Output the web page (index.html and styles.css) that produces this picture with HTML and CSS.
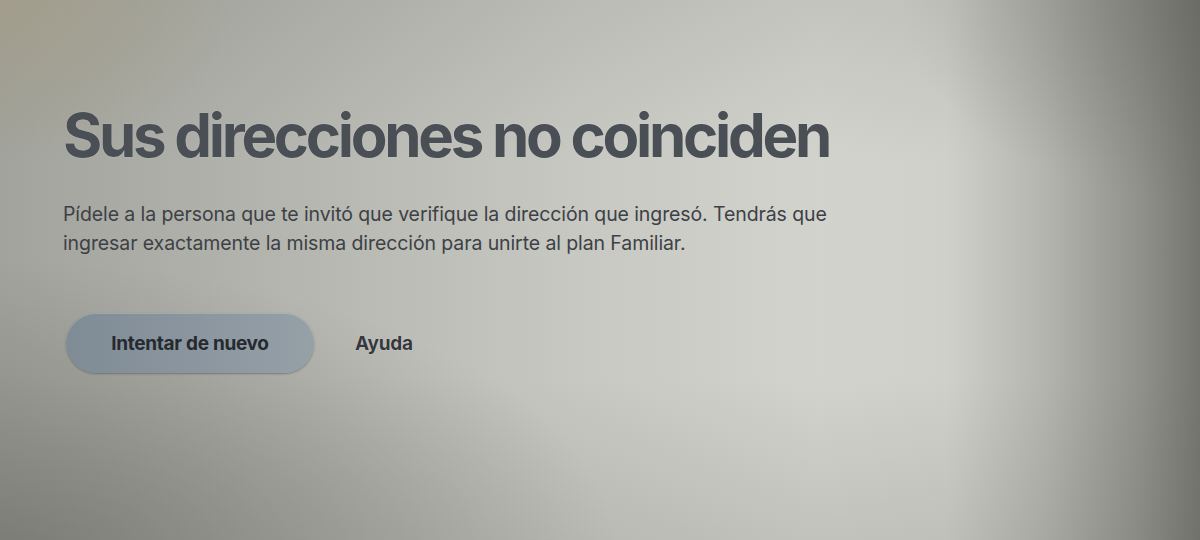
FILE: index.html
```html
<!DOCTYPE html>
<html lang="es">
<head>
<meta charset="utf-8">
<title>Sus direcciones no coinciden</title>
<link rel="stylesheet" href="styles.css">
</head>
<body>
<main class="screen">
  <section class="notice">
    <h1 class="notice-title">Sus direcciones no coinciden</h1>
    <p class="notice-text">Pídele a la persona que te invitó que verifique la dirección que ingresó. Tendrás que ingresar exactamente la misma dirección para unirte al plan Familiar.</p>
    <div class="actions">
      <button class="btn btn-primary" type="button">Intentar de nuevo</button>
      <button class="btn btn-link" type="button">Ayuda</button>
    </div>
  </section>
</main>
</body>
</html>
```
FILE: styles.css
```css
html, body {
  margin: 0;
  height: 100%;
}

body {
  font-family: Inter, "Noto Sans", "Liberation Sans", sans-serif;
  color: #3f4348;
  overflow: hidden;
}

.screen {
  box-sizing: border-box;
  width: 1200px;
  height: 540px;
  padding: 98px 0 0 63px;
  background:
    radial-gradient(ellipse 620px 300px at 0px 560px, rgba(80, 82, 76, 0.42), rgba(80, 82, 76, 0) 100%),
    radial-gradient(ellipse 240px 160px at 0px 0px, rgba(170, 160, 132, 0.5), rgba(170, 160, 132, 0) 100%),
    radial-gradient(ellipse 300px 200px at 1200px 0px, rgba(90, 92, 86, 0.3), rgba(90, 92, 86, 0) 100%),
    linear-gradient(180deg, rgba(90, 92, 86, 0.12) 0%, rgba(90, 92, 86, 0) 30%, rgba(90, 92, 86, 0) 70%, rgba(90, 92, 86, 0.14) 100%),
    linear-gradient(90deg, #a2a39c 0%, #b3b4ad 22%, #c7c8c1 48%, #d2d3cd 68%, #cfd0ca 79%, #b4b5ae 87%, #90918b 95%, #74756f 100%);
}

.notice {
  width: 800px;
}

.notice-title {
  margin: 0;
  font-size: 60px;
  font-weight: 700;
  letter-spacing: -3.3px;
  line-height: 74px;
  color: #4a4f55;
  text-shadow: 0 0 1px rgba(240, 240, 235, 0.7);
}

.notice-text {
  margin: 28px 0 0;
  font-size: 19.5px;
  line-height: 29px;
  color: #3d4146;
  letter-spacing: -0.1px;
}

.actions {
  display: flex;
  align-items: center;
  gap: 41px;
  margin-top: 55px;
  padding-left: 3px;
}

.btn {
  font-family: inherit;
  font-size: 19px;
  font-weight: 700;
  letter-spacing: -0.3px;
  border: 0;
  cursor: pointer;
}

.btn-primary {
  width: 248px;
  height: 60px;
  border-radius: 30px;
  color: #262a2f;
  background: linear-gradient(90deg, #7f8b95 0%, #8a959f 50%, #96a0a7 100%);
  box-shadow: 0 1px 2px rgba(60, 64, 60, 0.45), inset 0 1px 0 rgba(200, 205, 210, 0.4);
}

.btn-link {
  padding: 0;
  background: none;
  color: #34383d;
  text-shadow: 0 0 1px rgba(240, 240, 235, 0.8);
}
```
